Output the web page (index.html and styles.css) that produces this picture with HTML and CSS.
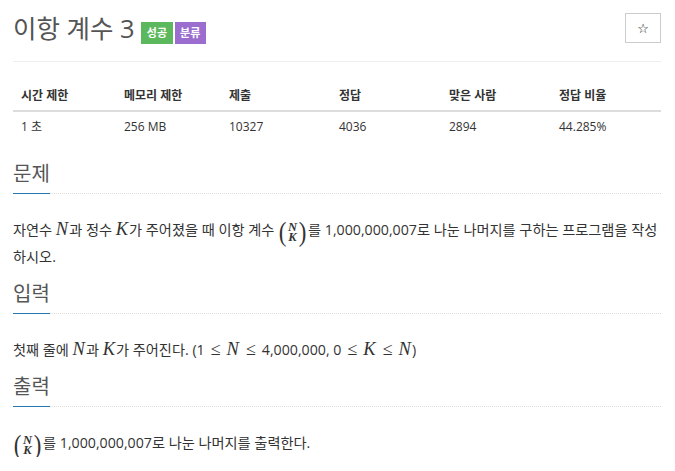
FILE: index.html
```html
<!DOCTYPE html>
<html lang="ko">
<head>
<meta charset="utf-8">
<link rel="stylesheet" href="styles.css">
</head>
<body>
<div class="page">
  <div class="title-row">
    <h1 class="title">이항 계수 3 <span class="label green">성공</span><span class="label purple">분류</span></h1>
    <button class="star">☆</button>
  </div>
  <div class="hr"></div>
  <table class="info">
    <thead>
      <tr><th class="c1">시간 제한</th><th class="c2">메모리 제한</th><th>제출</th><th>정답</th><th>맞은 사람</th><th>정답 비율</th></tr>
    </thead>
    <tbody>
      <tr><td>1 초</td><td>256 MB</td><td>10327</td><td>4036</td><td>2894</td><td>44.285%</td></tr>
    </tbody>
  </table>

  <section class="sec first">
    <div class="head"><h2>문제</h2></div>
    <p class="text">자연수 <i class="m">N</i>과 정수 <i class="m">K</i>가 주어졌을 때 이항 계수 <span class="binom"><span class="par">(</span><span class="stack"><i>N</i><i>K</i></span><span class="par">)</span></span>를 1,000,000,007로 나눈 나머지를 구하는 프로그램을 작성하시오.</p>
  </section>

  <section class="sec">
    <div class="head"><h2>입력</h2></div>
    <p class="text">첫째 줄에 <i class="m">N</i>과 <i class="m">K</i>가 주어진다. (1<span class="op">≤</span><i class="m">N</i><span class="op">≤</span>4,000,000, 0<span class="op">≤</span><i class="m">K</i><span class="op">≤</span><i class="m">N</i>)</p>
  </section>

  <section class="sec">
    <div class="head"><h2>출력</h2></div>
    <p class="text"><span class="binom"><span class="par">(</span><span class="stack"><i>N</i><i>K</i></span><span class="par">)</span></span>를 1,000,000,007로 나눈 나머지를 출력한다.</p>
  </section>
</div>
</body>
</html>
```

FILE: styles.css
```css
* { box-sizing: border-box; }
html, body { margin: 0; padding: 0; background: #fff; }
body {
  font-family: "Open Sans", "Noto Sans CJK KR", sans-serif;
  color: #333;
}
.page {
  width: 675px;
  padding: 0 14px 0 13px;
}
.title-row {
  display: flex;
  justify-content: space-between;
  align-items: flex-start;
  padding-top: 13px;
  height: 61px;
}
.title {
  margin: 0;
  font-weight: 400;
  font-size: 25.5px;
  line-height: 30px;
  height: 30px;
  color: #555;
  font-family: "Open Sans", "Noto Sans CJK KR", sans-serif;
  white-space: nowrap;
}
.label {
  display: inline-block;
  vertical-align: 1px;
  font-size: 11px;
  font-weight: 700;
  color: #fff;
  padding: 0 5.5px;
  height: 22px;
  line-height: 22px;
  margin-left: 2px;
}
.label.green { background: #5cb85c; margin-left: 0; }
.label.purple { background: #9b6dcf; }
.star {
  width: 36px;
  height: 30px;
  border: 1px solid #ccc;
  background: #fff;
  font-size: 13px;
  color: #111;
  padding: 0;
  font-family: "DejaVu Sans", sans-serif;
}
.hr {
  border-top: 1px solid #eee;
  margin-bottom: 18px;
}
.info {
  width: 648px;
  border-collapse: collapse;
  font-size: 12px;
}
.info th {
  text-align: left;
  font-weight: 700;
  padding: 8px 8px 6px;
  line-height: 16px;
  border-bottom: 2px solid #ddd;
  width: 110px;
}
.info th.c1 { width: 103px; }
.info th.c2 { width: 105px; }
.info td {
  padding: 6px 8px 8px;
  line-height: 18px;
}
.sec { margin: 0; }
.head {
  border-bottom: 1px dotted #ddd;
  margin-top: 9px;
}
.sec.first .head { margin-top: 15px; }
.head h2 {
  display: inline-block;
  margin: 0 0 -1px 0;
  font-size: 20px;
  font-weight: 400;
  line-height: 30px;
  color: #555;
  border-bottom: 1px solid #2576b3;
  padding-bottom: 4px;
}
.text {
  font-size: 14.2px;
  line-height: 26px;
  margin: 23px 0 0 0;
}
.m {
  font-family: "Liberation Serif", serif;
  font-style: italic;
  font-size: 18.5px;
  line-height: 0;
  padding-right: 1px;
}
.op {
  font-family: "Liberation Serif", serif;
  font-size: 18px;
  line-height: 0;
  margin: 0 6px;
}
.binom {
  display: inline-flex;
  align-items: center;
  vertical-align: -6px;
  height: 24px;
  margin-right: 1px;
}
.par {
  font-family: "Liberation Serif", serif;
  font-size: 27px;
  line-height: 24px;
  display: inline-block;
  transform: scaleX(0.85);
}
.stack {
  display: inline-flex;
  flex-direction: column;
  align-items: center;
  margin: 0 1px;
}
.stack i {
  font-family: "Liberation Serif", serif;
  font-style: italic;
  font-size: 12.5px;
  line-height: 10px;
  font-weight: 700;
}
```
